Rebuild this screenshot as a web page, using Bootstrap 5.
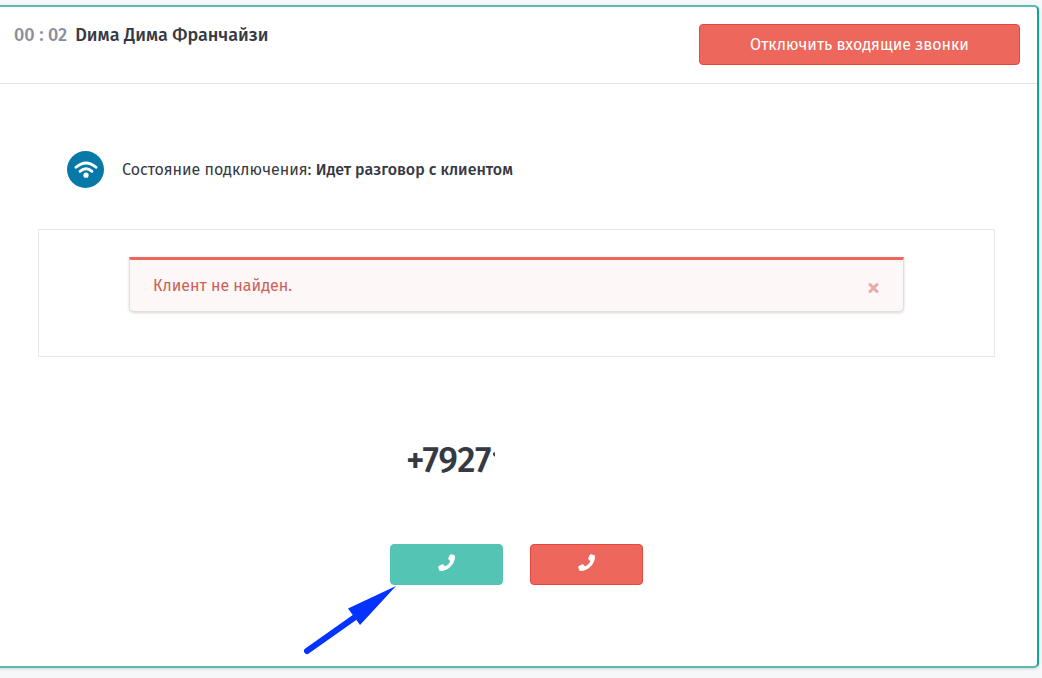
<!DOCTYPE html>
<html lang="ru">
<head>
<meta charset="utf-8">
<meta name="viewport" content="width=device-width, initial-scale=1">
<title>Входящий звонок</title>
<link href="https://cdn.jsdelivr.net/npm/bootstrap@5.3.0/dist/css/bootstrap.min.css" rel="stylesheet">
<style>
body { background: #f6f7f8; color: #363942; font-family: "Fira Sans", "Noto Sans", "Open Sans", sans-serif; font-size: 16px; line-height: 20px; }
.call-panel { margin: 5px 3px 11px -4px; border: 2px solid #58bdb0; border-right-color: #12a594; border-radius: 5px; box-shadow: 0 1px 3px rgba(0,0,0,.15); }
.call-head { min-height: 77px; padding: 17px 17px 18px 16px; border-bottom: 1px solid #e3e4e6; }
.call-title { font-size: 18px; line-height: 22px; font-weight: 500; margin: 0; }
.call-timer { color: #8b8d9b; }
.call-btn { height: 41px; padding: 0; border-radius: 4px; color: #fff; font-size: 16px; font-weight: 400; line-height: 20px; }
.btn-stop { background: #ee675c; border-color: #e4483c; }
.btn-stop:hover { background: #e4564b; border-color: #d94438; color: #fff; }
.btn-answer { background: #54c4b5; border-color: #54c4b5; }
.btn-answer:hover { background: #42b2a3; border-color: #42b2a3; color: #fff; }
.mute-btn { width: 321px; }
.call-body { padding: 67px 42px 81px 40px; }
.state-row { gap: 18px; padding-left: 29px; }
.state-icon { width: 37px; height: 37px; background: #0679a9; }
.state-label { font-size: 16px; }
.state-value { font-size: 16px; font-weight: 500; }
.client-box { margin-top: 41px; padding: 27px 90px 44px; border: 1px solid #e8e8ea; }
.client-alert { border: 1px solid #e5dcde; border-top: 3px solid #ec665c; border-radius: 0 0 5px 5px; background: #fef7f7; color: #cb6156; box-shadow: 0 1px 3px rgba(0,0,0,.16); padding: 16px 23px 15px; }
.alert-x { color: #e7aaa4; }
.dial-area { width: 253px; margin-top: 79px; }
.phone-number { font-size: 36px; line-height: 48px; font-weight: 500; padding-left: 16px; }
.dial-row { gap: 27px; margin-top: 60px; }
.pointer-arrow { position: absolute; right: 100%; top: 100%; margin-right: -7px; pointer-events: none; }
</style>
</head>
<body>
<main class="call-panel bg-white">
  <header class="call-head d-flex justify-content-between align-items-start">
    <h1 class="call-title"><span class="call-timer me-2">00 : 02</span>Dима Дима Франчайзи</h1>
    <button type="button" class="btn call-btn btn-stop mute-btn">Отключить входящие звонки</button>
  </header>
  <section class="call-body">
    <div class="state-row d-flex align-items-center">
      <span class="state-icon rounded-circle d-flex align-items-center justify-content-center">
        <svg width="24" height="18" viewBox="0 0 24 18" fill="none" stroke="#fff" stroke-linecap="round" aria-hidden="true"><path d="M2 6.3Q12-2.4 22 6.3" stroke-width="2.8"/><path d="M6 10.3Q12 5.3 18 10.3" stroke-width="2.8"/><circle cx="12" cy="14.2" r="2.6" fill="#fff" stroke="none"/></svg>
      </span>
      <div class="state-label">Состояние подключения: <strong class="state-value">Идет разговор с клиентом</strong></div>
    </div>
    <div class="client-box">
      <div class="client-alert d-flex align-items-center justify-content-between" role="alert">
        <span>Клиент не найден.</span>
        <button type="button" class="alert-x btn p-0 border-0 d-flex mt-1" aria-label="Закрыть"><svg width="13" height="12" viewBox="0 0 13 12" stroke="currentColor" stroke-width="3" stroke-linecap="round" aria-hidden="true"><path d="M3 2.5l7 7M10 2.5l-7 7"/></svg></button>
      </div>
    </div>
    <div class="dial-area mx-auto">
      <div class="phone-number d-flex align-items-center">+7927<svg width="3" height="16" viewBox="0 0 3 16" aria-hidden="true"><path d="M3 0v5L1 3V1z" fill="#4c4448"/></svg></div>
      <div class="dial-row d-flex">
        <div class="position-relative flex-fill">
          <button type="button" class="btn call-btn btn-answer w-100" aria-label="Ответить"><svg class="mb-1" width="17" height="17" viewBox="0 0 512 512" fill="currentColor" aria-hidden="true"><path stroke="currentColor" stroke-width="28" stroke-linejoin="round" d="M485 45l-96-24c-11-3-20 2-24 12l-45 103c-4 10-1 19 6 25l62 51c-36 77-99 141-177 177l-50-61c-7-8-17-10-26-6L34 367c-10 4-15 13-12 24l22 94c3 10 10 14 20 14 240 0 435-195 435-435 0-10-5-17-14-19z"/></svg></button>
          <svg class="pointer-arrow" width="94" height="72" viewBox="0 0 94 72" aria-hidden="true"><path d="M4 66L55 30" stroke="#0433ff" stroke-width="6" stroke-linecap="round"/><path d="M93 1L45 23.500L49 29L52 33L57 40z" fill="#0433ff"/></svg>
        </div>
        <div class="flex-fill">
          <button type="button" class="btn call-btn btn-stop w-100" aria-label="Завершить"><svg class="mb-1" width="17" height="17" viewBox="0 0 512 512" fill="currentColor" aria-hidden="true"><path stroke="currentColor" stroke-width="28" stroke-linejoin="round" d="M485 45l-96-24c-11-3-20 2-24 12l-45 103c-4 10-1 19 6 25l62 51c-36 77-99 141-177 177l-50-61c-7-8-17-10-26-6L34 367c-10 4-15 13-12 24l22 94c3 10 10 14 20 14 240 0 435-195 435-435 0-10-5-17-14-19z"/></svg></button>
        </div>
      </div>
    </div>
  </section>
</main>
<script src="https://cdn.jsdelivr.net/npm/bootstrap@5.3.0/dist/js/bootstrap.bundle.min.js"></script>
</body>
</html>
